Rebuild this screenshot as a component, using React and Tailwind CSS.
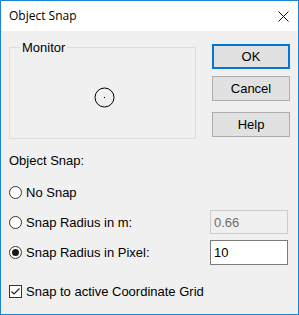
import React, { useState } from "react";

const font = { fontFamily: '"Liberation Sans", Arial, sans-serif' };

const Radio = ({ checked, onClick, label }) => (
  <label className="flex items-center gap-[4px] cursor-default" onClick={onClick}>
    <span className="w-[13px] h-[13px] rounded-full border border-[#333333] bg-white flex items-center justify-center">
      {checked && <span className="w-[7px] h-[7px] rounded-full bg-[#1a1a1a]" />}
    </span>
    <span className="text-[13px] leading-[15px] text-black">{label}</span>
  </label>
);

const Button = ({ children, primary }) => (
  <button
    className={
      "w-[78px] h-[25px] bg-[#e1e1e1] text-[13px] leading-[15px] text-black flex items-center justify-center " +
      (primary ? "border-2 border-[#0078d7]" : "border border-[#adadad]")
    }
  >
    {children}
  </button>
);

export default function App() {
  const [mode, setMode] = useState("pixel");
  const [grid, setGrid] = useState(true);

  return (
    <div
      className="w-[299px] h-[315px] border border-[#1883d7] bg-[#f0f0f0] flex flex-col"
      style={font}
    >
      {/* title bar */}
      <div className="h-[30px] bg-white flex items-center justify-between pl-[8px] pr-[9px] shrink-0">
        <span
          className="text-[12px] text-black"
          style={{ fontFamily: '"Open Sans", "Noto Sans", sans-serif' }}
        >
          Object Snap
        </span>
        <svg width="11" height="11" viewBox="0 0 11 11">
          <path d="M0.5 0.5 L10.5 10.5 M10.5 0.5 L0.5 10.5" stroke="#111" strokeWidth="1" />
        </svg>
      </div>

      <div className="flex flex-col pl-[8px] pr-[8px] pt-[9px]">
        <div className="flex gap-[16px]">
          <fieldset className="w-[187px] h-[99px] border border-[#dcdcdc] flex items-center justify-center pl-[3px] pt-[2px]">
            <legend className="ml-[7px] px-[2px] text-[13px] leading-[15px] text-black">
              Monitor
            </legend>
            <svg className="w-[21px] h-[21px] shrink-0" viewBox="0 0 21 21">
              <circle cx="10.5" cy="10.5" r="9.5" fill="none" stroke="#000" strokeWidth="1" />
              <rect x="10" y="10" width="1" height="1" fill="#000" />
            </svg>
          </fieldset>

          <div className="flex flex-col pt-[4px]">
            <Button primary>OK</Button>
            <div className="mt-[7px]">
              <Button>Cancel</Button>
            </div>
            <div className="mt-[11px]">
              <Button>Help</Button>
            </div>
          </div>
        </div>

        <div className="mt-[14px] text-[13px] leading-[15px] text-black">Object Snap:</div>

        <div className="mt-[12px] flex flex-col gap-[6px] pr-[2px]">
          <div className="h-[24px] flex items-center">
            <Radio checked={mode === "none"} onClick={() => setMode("none")} label="No Snap" />
          </div>
          <div className="h-[24px] flex items-center justify-between">
            <Radio checked={mode === "m"} onClick={() => setMode("m")} label="Snap Radius in m:" />
            <input
              disabled
              value="0.66"
              readOnly
              className="w-[78px] h-[24px] border border-[#cccccc] bg-[#f0f0f0] text-[#6d6d6d] text-[13px] px-[3px] outline-none"
              style={font}
            />
          </div>
          <div className="h-[24px] flex items-center justify-between">
            <Radio checked={mode === "pixel"} onClick={() => setMode("pixel")} label="Snap Radius in Pixel:" />
            <input
              defaultValue="10"
              className="w-[78px] h-[25px] border border-[#7a7a7a] bg-white text-black text-[13px] px-[3px] outline-none"
              style={font}
            />
          </div>
        </div>

        <div className="mt-[15px] h-[24px] flex items-center">
          <label className="flex items-center gap-[4px]" onClick={() => setGrid(!grid)}>
            <span className="w-[13px] h-[13px] border border-[#333333] bg-white flex items-center justify-center">
              {grid && (
                <svg width="11" height="11" viewBox="0 0 11 11">
                  <path d="M1.5 5.5 L4 8 L9.5 2.5" fill="none" stroke="#222" strokeWidth="1.2" />
                </svg>
              )}
            </span>
            <span className="text-[13px] leading-[15px] text-black">Snap to active Coordinate Grid</span>
          </label>
        </div>
      </div>
    </div>
  );
}
